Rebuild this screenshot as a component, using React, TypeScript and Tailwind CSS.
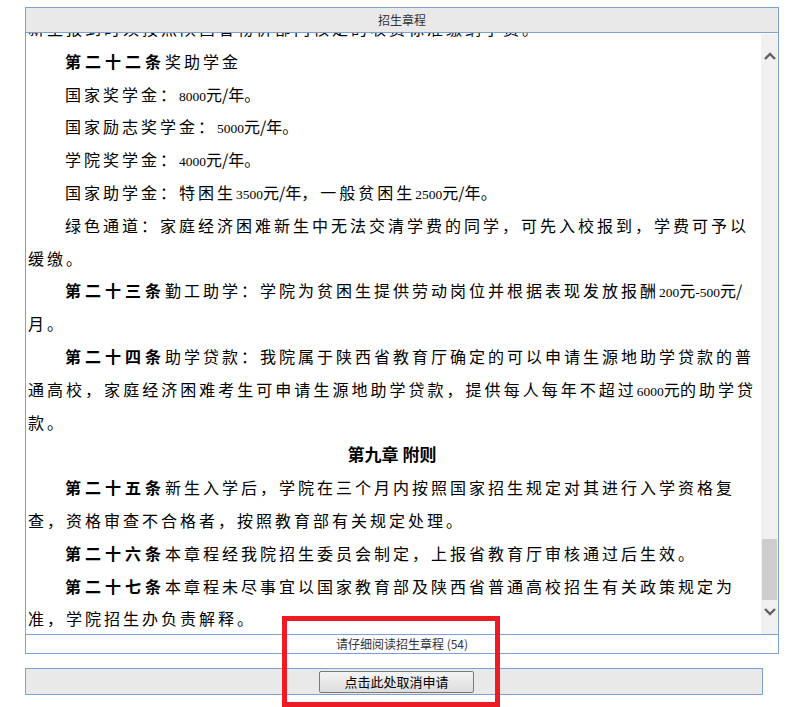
import type { ReactNode } from 'react'

const cn = "font-['Noto_Sans_CJK_SC',sans-serif]"

function Num({ v, unit = '元' }: { v: string; unit?: string }) {
  return (
    <span className="tracking-normal">
      <span className="font-['Liberation_Serif',serif] text-[13.5px]">{v}</span>
      {unit}
    </span>
  )
}

function Line({
  children,
  indent,
  justify,
  className = '',
}: {
  children: ReactNode
  indent?: boolean
  justify?: boolean
  className?: string
}) {
  return (
    <div
      className={`h-[32.8px] leading-[32.8px] tracking-[3px] ${indent ? 'pl-[37px]' : ''} ${
        justify ? 'text-justify [text-align-last:justify]' : 'whitespace-nowrap'
      } ${className}`}
    >
      {children}
    </div>
  )
}

function Art({ children }: { children: ReactNode }) {
  return <b className="font-bold tracking-[4px]">{children}</b>
}

function Chevron({ down }: { down?: boolean }) {
  return (
    <svg width="12" height="8" viewBox="0 0 12 8" className={down ? 'rotate-180' : ''}>
      <polyline points="1,7 6,2 11,7" fill="none" stroke="#606060" strokeWidth="2.4" />
    </svg>
  )
}

export default function App() {
  return (
    <div className={`relative w-[802px] h-[707px] bg-white overflow-hidden ${cn}`}>
      {/* 章程面板 */}
      <div className="ml-[25px] mt-[7px] w-[754px] border border-[#7ba1d6]">
        <div className="h-[25px] bg-[#e9e9e9] border-b border-[#7ba1d6] flex items-center justify-center text-[12px] text-[#333]">
          招生章程
        </div>

        <div className="flex h-[602px] border-b border-[#7ba1d6]">
          <div className="flex-1 overflow-hidden pl-[2px] pr-[5px] text-[16px] text-black">
            <div className="-mt-[21px]">
              <Line>新生报到时须按照陕西省物价部门核定的收费标准缴纳学费。</Line>
              <Line indent>
                <Art>第二十二条</Art>奖助学金
              </Line>
              <Line indent>
                国家奖学金：<Num v="8000" />
                <span className="tracking-normal">/年</span>。
              </Line>
              <Line indent>
                国家励志奖学金：<Num v="5000" />
                <span className="tracking-normal">/年</span>。
              </Line>
              <Line indent>
                学院奖学金：<Num v="4000" />
                <span className="tracking-normal">/年</span>。
              </Line>
              <Line indent>
                国家助学金：特困生<Num v="3500" />
                <span className="tracking-normal">/年</span>，一般贫困生<Num v="2500" />
                <span className="tracking-normal">/年</span>。
              </Line>
              <Line indent justify className="mr-[7px]">
                绿色通道：家庭经济困难新生中无法交清学费的同学，可先入校报到，学费可予以
              </Line>
              <Line>缓缴。</Line>
              <Line indent>
                <Art>第二十三条</Art>勤工助学：学院为贫困生提供劳动岗位并根据表现发放报酬
                <Num v="200" />
                <Num v="-500" />
                <span className="tracking-normal">/</span>
              </Line>
              <Line>月。</Line>
              <Line indent>
                <Art>第二十四条</Art>助学贷款：我院属于陕西省教育厅确定的可以申请生源地助学贷款的普
              </Line>
              <Line justify>
                通高校，家庭经济困难考生可申请生源地助学贷款，提供每人每年不超过<Num v="6000" />的助学贷
              </Line>
              <Line>款。</Line>
              <div className="h-[32.8px] leading-[32.8px] text-center text-[17px] font-bold">第九章 附则</div>
              <Line indent>
                <Art>第二十五条</Art>新生入学后，学院在三个月内按照国家招生规定对其进行入学资格复
              </Line>
              <Line>查，资格审查不合格者，按照教育部有关规定处理。</Line>
              <Line indent>
                <Art>第二十六条</Art>本章程经我院招生委员会制定，上报省教育厅审核通过后生效。
              </Line>
              <Line indent>
                <Art>第二十七条</Art>本章程未尽事宜以国家教育部及陕西省普通高校招生有关政策规定为
              </Line>
              <Line>准，学院招生办负责解释。</Line>
            </div>
          </div>

          {/* 滚动条 */}
          <div className="w-[17px] mt-[1px] bg-[#f0f0f0] flex flex-col items-center">
            <div className="h-[44px] flex items-center justify-center">
              <Chevron />
            </div>
            <div className="flex-1" />
            <div className="w-[15px] h-[61px] bg-[#cdcdcd]" />
            <div className="h-[24px] flex items-center justify-center">
              <Chevron down />
            </div>
            <div className="h-[10px]" />
          </div>
        </div>

        <div className="h-[18px] flex items-center justify-center text-[12px] text-[#333]">
          请仔细阅读招生章程 (54)
        </div>
      </div>

      {/* 取消按钮 */}
      <div className="ml-[25px] mt-[14px] w-[738px] h-[27px] border border-[#7ba1d6] bg-[#e9e9e9] flex items-center justify-center">
        <button className="ml-[5px] h-[22px] w-[155px] rounded-[2px] border border-[#7a7a7a] bg-gradient-to-b from-[#f4f4f4] to-[#dcdcdc] text-[13px] text-black leading-none">
          点击此处取消申请
        </button>
      </div>

      {/* 红框标注 */}
      <div className="absolute left-[282px] top-[616px] w-[218px] h-[91px] border-[5px] border-[#ed1c24] pointer-events-none" />
    </div>
  )
}
